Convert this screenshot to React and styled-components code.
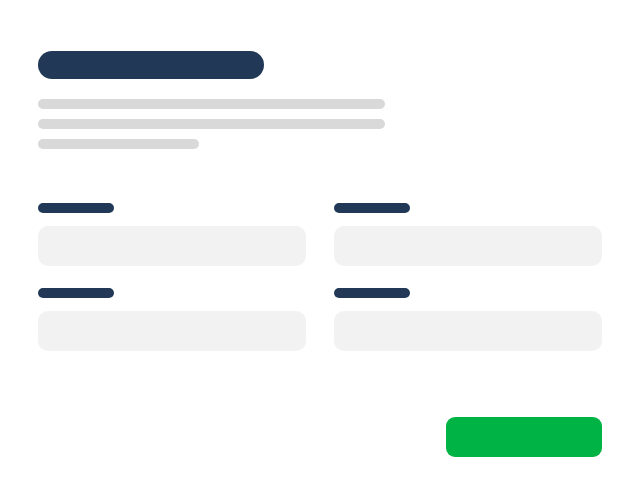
import React from "react";
import styled, { createGlobalStyle } from "styled-components";

const GlobalStyle = createGlobalStyle`
  html, body {
    margin: 0;
    padding: 0;
    background: #ffffff;
    font-family: "Liberation Sans", Arial, sans-serif;
  }
`;

const Page = styled.div`
  width: 640px;
  height: 504px;
  box-sizing: border-box;
  padding: 51px 38px 0 38px;
  display: flex;
  flex-direction: column;
`;

const Header = styled.div`
  display: flex;
  flex-direction: column;
`;

const TitleBar = styled.div`
  width: 226px;
  height: 28px;
  border-radius: 14px;
  background-color: #213957;
  margin-bottom: 20px;
`;

const TextLines = styled.div`
  display: flex;
  flex-direction: column;
  gap: 10px;
`;

const TextLine = styled.div`
  width: ${(props) => props.width};
  height: 10px;
  border-radius: 5px;
  background-color: #d9d9d9;
`;

const FormGrid = styled.div`
  margin-top: 54px;
  display: grid;
  grid-template-columns: 1fr 1fr;
  column-gap: 28px;
  row-gap: 22px;
`;

const Field = styled.div`
  display: flex;
  flex-direction: column;
  gap: 13px;
`;

const Label = styled.div`
  width: 76px;
  height: 10px;
  border-radius: 5px;
  background-color: #213957;
`;

const Input = styled.div`
  height: 40px;
  border-radius: 10px;
  background-color: #f2f2f2;
`;

const Actions = styled.div`
  margin-top: 66px;
  display: flex;
  justify-content: flex-end;
`;

const Button = styled.div`
  width: 156px;
  height: 40px;
  border-radius: 9px;
  background-color: #00b345;
`;

export default function App() {
  return (
    <>
      <GlobalStyle />
      <Page>
        <Header>
          <TitleBar />
          <TextLines>
            <TextLine width="347px" />
            <TextLine width="347px" />
            <TextLine width="161px" />
          </TextLines>
        </Header>
        <FormGrid>
          {[0, 1, 2, 3].map((i) => (
            <Field key={i}>
              <Label />
              <Input />
            </Field>
          ))}
        </FormGrid>
        <Actions>
          <Button />
        </Actions>
      </Page>
    </>
  );
}
